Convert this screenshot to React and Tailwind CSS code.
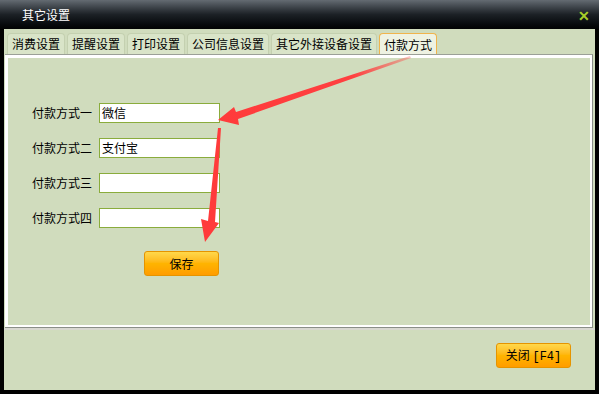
import React from "react"

const font = { fontFamily: '"Noto Sans CJK SC", "Liberation Sans", sans-serif' }

const tabs = ["消费设置", "提醒设置", "打印设置", "公司信息设置", "其它外接设备设置", "付款方式"]

const rows = [
  { label: "付款方式一", value: "微信" },
  { label: "付款方式二", value: "支付宝" },
  { label: "付款方式三", value: "" },
  { label: "付款方式四", value: "" },
]

const OrangeButton = ({ children, className = "" }) => (
  <button
    className={
      "h-[25px] w-[75px] rounded-[3px] border border-[#e59400] bg-gradient-to-b from-[#ffd84a] via-[#ffb400] to-[#ff9c00] text-[12px] text-black leading-none " +
      className
    }
  >
    {children}
  </button>
)

export default function App() {
  return (
    <div className="relative w-[599px] h-[394px] bg-black flex flex-col text-[12px] text-black" style={font}>
      {/* title bar */}
      <div className="h-[29px] bg-gradient-to-b from-[#646b72] via-[#1c2126] to-[#020304] flex items-center justify-between pl-[22px] pr-[9px]">
        <span className="text-white text-[12px]">其它设置</span>
        <span className="text-[#a8d028] text-[14px] font-bold leading-none">✕</span>
      </div>

      {/* body */}
      <div className="flex-1 mx-[4px] mb-[4px] bg-[#d0dcbd] flex flex-col">
        {/* tabs */}
        <div className="flex gap-[2px] pl-[3px] pt-[4px] h-[25px]">
          {tabs.map((t, i) =>
            i === tabs.length - 1 ? (
              <div
                key={t}
                className="h-[22px] px-[4px] rounded-t-[4px] border border-b-0 border-[#f0b44c] bg-[#eef2e2] flex items-center"
              >
                {t}
              </div>
            ) : (
              <div
                key={t}
                className="h-[21px] px-[4px] rounded-t-[4px] border border-b-0 border-[#c4d0b0] bg-[#d9e4c8] flex items-center"
              >
                {t}
              </div>
            )
          )}
        </div>

        {/* panel */}
        <div className="ml-[1px] mr-[2px] h-[274px] border border-l-0 border-t-[#9ba097] border-r-[#8a8e88] border-b-[#8a8e88]">
          <div className="h-full border-t-[3px] border-l-[3px] border-r-[2px] border-b-[2px] border-white bg-[#d0dcbd] pt-[45px] pl-[24px]">
            <div className="flex flex-col gap-[15px]">
              {rows.map((r) => (
                <div key={r.label} className="flex items-center h-[20px]">
                  <span className="w-[67px]">{r.label}</span>
                  <div className="w-[121px] h-[20px] border border-[#8aac3c] bg-white flex items-center pl-[2px]">
                    {r.value}
                  </div>
                </div>
              ))}
            </div>
            <div className="pl-[112px] pt-[23px]">
              <OrangeButton>保存</OrangeButton>
            </div>
          </div>
        </div>

        {/* footer */}
        <div className="h-[2px] bg-[#d8d8d0]" />
        <div className="flex-1 flex justify-end items-start pt-[13px] pr-[24px]">
          <OrangeButton>
            关闭 <span className="font-['Liberation_Mono',monospace]">[F4]</span>
          </OrangeButton>
        </div>
      </div>

      {/* red annotation arrows */}
      <svg className="absolute left-0 top-0 pointer-events-none" width="599" height="394">
        <defs>
          <linearGradient id="g1" x1="410" y1="57" x2="220" y2="120" gradientUnits="userSpaceOnUse">
            <stop offset="0" stopColor="#ff4040" stopOpacity="0.3" />
            <stop offset="0.3" stopColor="#ff4040" />
            <stop offset="1" stopColor="#ff3b3b" />
          </linearGradient>
        </defs>
        <polygon points="410,56 236,112 234,107 218,120 239,125 238,119 411,58" fill="url(#g1)" />
        <polygon points="218,128 221,128 215,222 219,223 205,242 201,219 208,221" fill="#ff3b3b" />
      </svg>
    </div>
  )
}
